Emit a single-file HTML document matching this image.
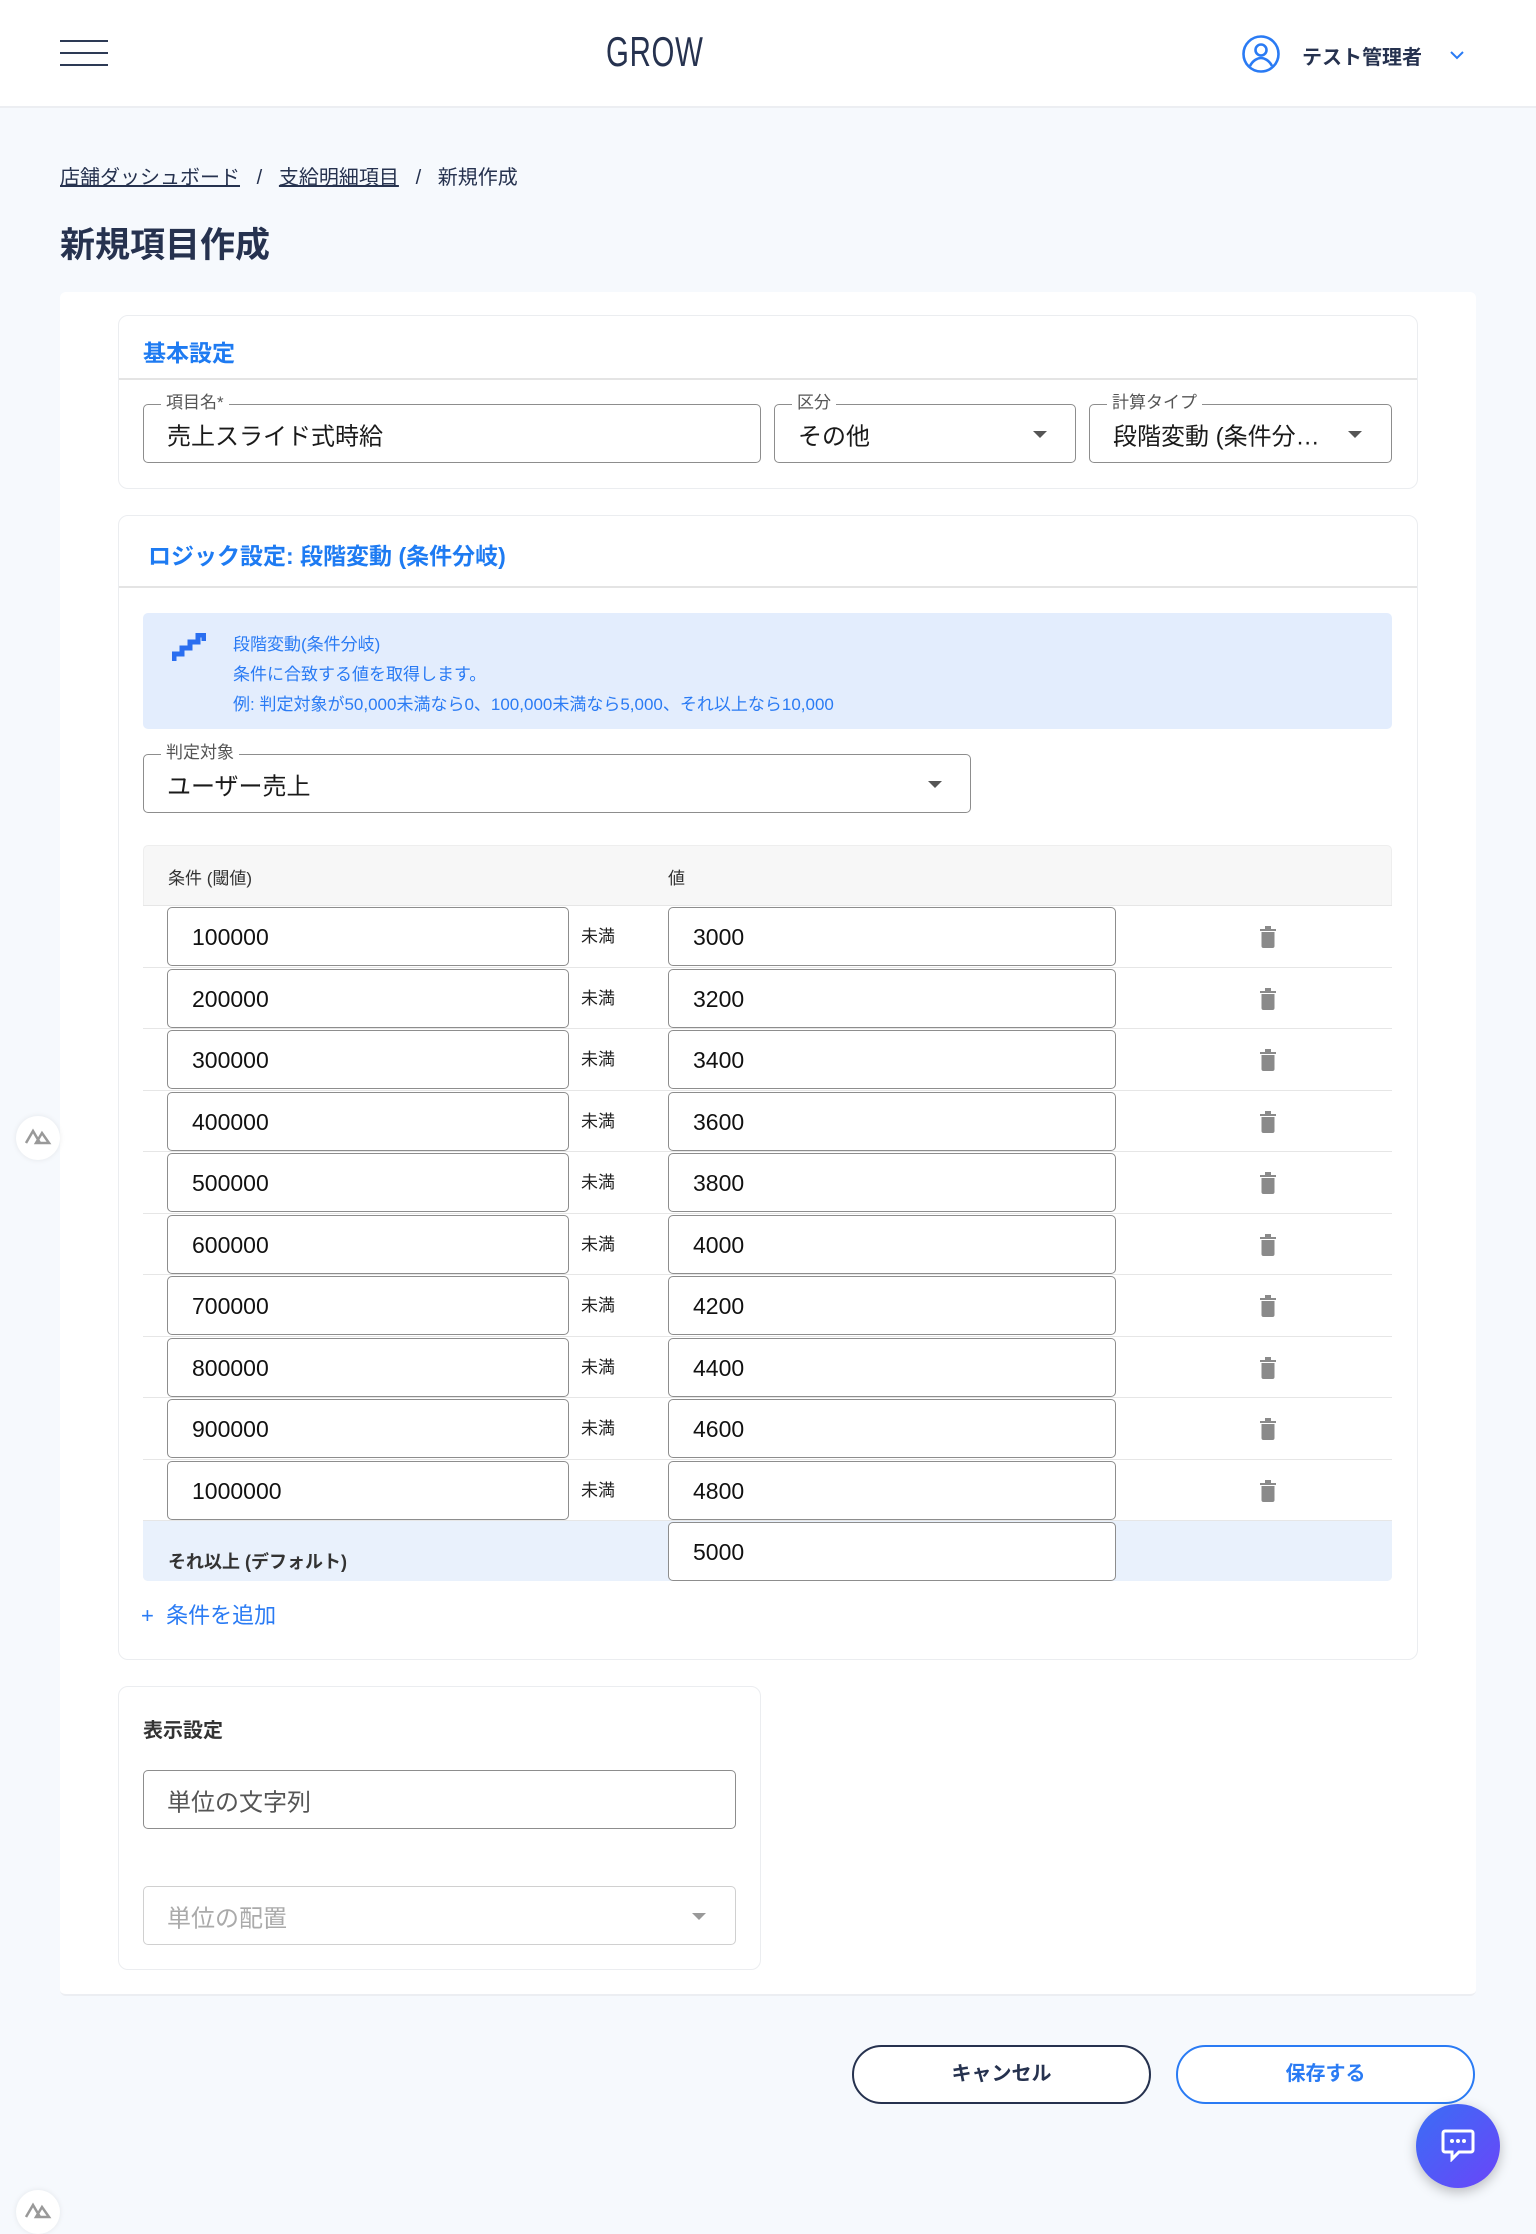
<!DOCTYPE html>
<html><head><meta charset="utf-8"><style>
*{box-sizing:border-box;margin:0;padding:0}
body{width:1536px;height:2224px;background:#f6f9fd;font-family:"Liberation Sans","Noto Sans CJK JP",sans-serif;color:#222;position:relative;overflow:hidden}
.a{position:absolute}
.hdr{left:0;top:0;width:1536px;height:108px;background:#fff;border-bottom:2px solid #eceef2}
.card{background:#fff;border:1.5px solid #ebedf0;border-radius:10px}
.fld{border:1.5px solid #8d8d8d;border-radius:5px;background:#fff}
.lbl{font-size:17px;color:#555;background:#fff;padding:0 5px;position:absolute;top:-12px;left:17px;line-height:20px}
.val{position:absolute;left:23px;top:50%;transform:translateY(-50%);font-size:24px;color:#1a1a1a}
.caret{position:absolute;width:0;height:0;border-left:7px solid transparent;border-right:7px solid transparent;border-top:7px solid #555;top:50%;margin-top:-3px}
.row{position:absolute;left:143px;width:1249px;height:62px;border-top:1.5px solid #e6e6e6;background:#fff}
.in{position:absolute;top:1px;height:59px;border:1.5px solid #8d8d8d;border-radius:5px;background:#fff;font-size:23px;padding-left:24px;line-height:58px;color:#111}
.mm{position:absolute;left:438px;top:16px;font-size:17px;color:#222}
.tr{position:absolute;left:1117px;top:20px;width:16px;height:22px}
</style></head><body>
<div class="a hdr"></div>
<div class="a" style="left:60px;top:40px;width:48px;height:2px;background:#2d3a55"></div>
<div class="a" style="left:60px;top:52px;width:48px;height:2px;background:#2d3a55"></div>
<div class="a" style="left:60px;top:64px;width:48px;height:2px;background:#2d3a55"></div>
<div class="a" style="left:606px;top:28px;font-size:42px;color:#26324f;transform:scaleX(0.70);transform-origin:left;letter-spacing:1px;font-weight:300">GROW</div>
<svg class="a" style="left:1241px;top:34px" width="40" height="40" viewBox="0 0 40 40"><circle cx="20" cy="20" r="17.5" fill="none" stroke="#2a7bf4" stroke-width="2.6"/><circle cx="20" cy="16" r="5.5" fill="none" stroke="#2a7bf4" stroke-width="2.6"/><path d="M9 32c3-6 8-8 11-8s8 2 11 8" fill="none" stroke="#2a7bf4" stroke-width="2.6"/></svg>
<div class="a" style="left:1302px;top:41px;font-size:20px;font-weight:bold;color:#26324f">テスト管理者</div>
<svg class="a" style="left:1449px;top:49px" width="16" height="12" viewBox="0 0 16 12"><path d="M2 3l6 6 6-6" fill="none" stroke="#2a7bf4" stroke-width="2"/></svg>

<div class="a" style="left:60px;top:161px;font-size:20px;color:#26324f"><span style="text-decoration:underline">店舗ダッシュボード</span>&nbsp;&nbsp; / &nbsp;&nbsp;<span style="text-decoration:underline">支給明細項目</span>&nbsp;&nbsp; / &nbsp;&nbsp;新規作成</div>
<div class="a" style="left:60px;top:217px;font-size:35px;font-weight:bold;color:#26324f">新規項目作成</div>

<div class="a" style="left:60px;top:292px;width:1416px;height:1704px;background:#fff;border-radius:6px;border-bottom:2px solid #eceef2"></div>

<div class="a card" style="left:118px;top:315px;width:1300px;height:174px"></div>
<div class="a" style="left:143px;top:334px;font-size:23px;font-weight:bold;color:#1e7bf2">基本設定</div>
<div class="a" style="left:119px;top:378px;width:1298px;height:2px;background:#e4e4e4"></div>
<div class="a fld" style="left:143px;top:404px;width:618px;height:59px"><span class="lbl">項目名*</span><span class="val">売上スライド式時給</span></div>
<div class="a fld" style="left:774px;top:404px;width:302px;height:59px"><span class="lbl">区分</span><span class="val">その他</span><span class="caret" style="left:258px"></span></div>
<div class="a fld" style="left:1089px;top:404px;width:303px;height:59px"><span class="lbl">計算タイプ</span><span class="val">段階変動 (条件分…</span><span class="caret" style="left:258px"></span></div>

<div class="a card" style="left:118px;top:515px;width:1300px;height:1145px"></div>
<div class="a" style="left:148px;top:537px;font-size:23px;font-weight:bold;color:#1e7bf2">ロジック設定: 段階変動 (条件分岐)</div>
<div class="a" style="left:119px;top:586px;width:1298px;height:2px;background:#e4e4e4"></div>
<div class="a" style="left:143px;top:613px;width:1249px;height:116px;background:#e3edfd;border-radius:5px"></div>
<svg class="a" style="left:172px;top:633px" width="34" height="30" viewBox="0 0 34 30"><path d="M2 28v-7h8v-6h8v-6h8V2h6v6" fill="none" stroke="#2a6ef0" stroke-width="5"/></svg>
<div class="a" style="left:233px;top:630px;font-size:17px;color:#2a7bf4;line-height:30px">段階変動(条件分岐)<br>条件に合致する値を取得します。<br>例: 判定対象が50,000未満なら0、100,000未満なら5,000、それ以上なら10,000</div>
<div class="a fld" style="left:143px;top:754px;width:828px;height:59px"><span class="lbl">判定対象</span><span class="val">ユーザー売上</span><span class="caret" style="left:784px"></span></div>

<div class="a" style="left:143px;top:845px;width:1249px;height:736px;background:#f7f7f7;border-radius:5px;border:1px solid #eee"></div>
<div class="a" style="left:168px;top:864px;font-size:17px;color:#333">条件 (閾値)</div>
<div class="a" style="left:668px;top:864px;font-size:17px;color:#333">値</div>

<div class="row" style="top:905px"><div class="in" style="left:24px;width:402px">100000</div><span class="mm">未満</span><div class="in" style="left:525px;width:448px">3000</div><svg class="tr" viewBox="0 0 16 22"><path d="M0 3h16v2H0zM5 0h6v3H5zM1.5 6h13v14a2 2 0 0 1-2 2h-9a2 2 0 0 1-2-2z" fill="#8a8a8a"/></svg></div>
<div class="row" style="top:967px"><div class="in" style="left:24px;width:402px">200000</div><span class="mm">未満</span><div class="in" style="left:525px;width:448px">3200</div><svg class="tr" viewBox="0 0 16 22"><path d="M0 3h16v2H0zM5 0h6v3H5zM1.5 6h13v14a2 2 0 0 1-2 2h-9a2 2 0 0 1-2-2z" fill="#8a8a8a"/></svg></div>
<div class="row" style="top:1028px"><div class="in" style="left:24px;width:402px">300000</div><span class="mm">未満</span><div class="in" style="left:525px;width:448px">3400</div><svg class="tr" viewBox="0 0 16 22"><path d="M0 3h16v2H0zM5 0h6v3H5zM1.5 6h13v14a2 2 0 0 1-2 2h-9a2 2 0 0 1-2-2z" fill="#8a8a8a"/></svg></div>
<div class="row" style="top:1090px"><div class="in" style="left:24px;width:402px">400000</div><span class="mm">未満</span><div class="in" style="left:525px;width:448px">3600</div><svg class="tr" viewBox="0 0 16 22"><path d="M0 3h16v2H0zM5 0h6v3H5zM1.5 6h13v14a2 2 0 0 1-2 2h-9a2 2 0 0 1-2-2z" fill="#8a8a8a"/></svg></div>
<div class="row" style="top:1151px"><div class="in" style="left:24px;width:402px">500000</div><span class="mm">未満</span><div class="in" style="left:525px;width:448px">3800</div><svg class="tr" viewBox="0 0 16 22"><path d="M0 3h16v2H0zM5 0h6v3H5zM1.5 6h13v14a2 2 0 0 1-2 2h-9a2 2 0 0 1-2-2z" fill="#8a8a8a"/></svg></div>
<div class="row" style="top:1213px"><div class="in" style="left:24px;width:402px">600000</div><span class="mm">未満</span><div class="in" style="left:525px;width:448px">4000</div><svg class="tr" viewBox="0 0 16 22"><path d="M0 3h16v2H0zM5 0h6v3H5zM1.5 6h13v14a2 2 0 0 1-2 2h-9a2 2 0 0 1-2-2z" fill="#8a8a8a"/></svg></div>
<div class="row" style="top:1274px"><div class="in" style="left:24px;width:402px">700000</div><span class="mm">未満</span><div class="in" style="left:525px;width:448px">4200</div><svg class="tr" viewBox="0 0 16 22"><path d="M0 3h16v2H0zM5 0h6v3H5zM1.5 6h13v14a2 2 0 0 1-2 2h-9a2 2 0 0 1-2-2z" fill="#8a8a8a"/></svg></div>
<div class="row" style="top:1336px"><div class="in" style="left:24px;width:402px">800000</div><span class="mm">未満</span><div class="in" style="left:525px;width:448px">4400</div><svg class="tr" viewBox="0 0 16 22"><path d="M0 3h16v2H0zM5 0h6v3H5zM1.5 6h13v14a2 2 0 0 1-2 2h-9a2 2 0 0 1-2-2z" fill="#8a8a8a"/></svg></div>
<div class="row" style="top:1397px"><div class="in" style="left:24px;width:402px">900000</div><span class="mm">未満</span><div class="in" style="left:525px;width:448px">4600</div><svg class="tr" viewBox="0 0 16 22"><path d="M0 3h16v2H0zM5 0h6v3H5zM1.5 6h13v14a2 2 0 0 1-2 2h-9a2 2 0 0 1-2-2z" fill="#8a8a8a"/></svg></div>
<div class="row" style="top:1459px"><div class="in" style="left:24px;width:402px">1000000</div><span class="mm">未満</span><div class="in" style="left:525px;width:448px">4800</div><svg class="tr" viewBox="0 0 16 22"><path d="M0 3h16v2H0zM5 0h6v3H5zM1.5 6h13v14a2 2 0 0 1-2 2h-9a2 2 0 0 1-2-2z" fill="#8a8a8a"/></svg></div>
<div class="row" style="top:1520px;height:61px;background:#e9f1fc;border-radius:0 0 5px 5px"><span style="position:absolute;left:25px;top:27px;font-size:18px;color:#333;font-weight:bold">それ以上 (デフォルト)</span><div class="in" style="left:525px;width:448px">5000</div></div>

<div class="a" style="left:141px;top:1598px;font-size:22px;color:#2a7bf4">+&nbsp;&nbsp;条件を追加</div>

<div class="a card" style="left:118px;top:1686px;width:643px;height:284px"></div>
<div class="a" style="left:143px;top:1714px;font-size:20px;font-weight:bold;color:#333">表示設定</div>
<div class="a fld" style="left:143px;top:1770px;width:593px;height:59px"><span class="val" style="color:#555">単位の文字列</span></div>
<div class="a fld" style="left:143px;top:1886px;width:593px;height:59px;border-color:#d0d0d0"><span class="val" style="color:#aaa">単位の配置</span><span class="caret" style="left:548px;border-top-color:#999"></span></div>

<div class="a" style="left:852px;top:2045px;width:299px;height:59px;border:2px solid #26324f;border-radius:30px;background:#fff;text-align:center;line-height:55px;font-size:20px;font-weight:bold;color:#26324f">キャンセル</div>
<div class="a" style="left:1176px;top:2045px;width:299px;height:59px;border:2px solid #2a7bf4;border-radius:30px;background:#fff;text-align:center;line-height:55px;font-size:20px;font-weight:bold;color:#2a7bf4">保存する</div>

<div class="a" style="left:1416px;top:2104px;width:84px;height:84px;border-radius:50%;background:linear-gradient(135deg,#3a6ef6,#6a45f8);box-shadow:0 4px 12px rgba(0,0,0,.25)"></div>
<svg class="a" style="left:1440px;top:2128px" width="36" height="34" viewBox="0 0 36 34"><path d="M5 3h26a2 2 0 0 1 2 2v17a2 2 0 0 1-2 2H19l-7 7v-7H5a2 2 0 0 1-2-2V5a2 2 0 0 1 2-2z" fill="none" stroke="#fff" stroke-width="3"/><circle cx="12" cy="13" r="2" fill="#fff"/><circle cx="18" cy="13" r="2" fill="#fff"/><circle cx="24" cy="13" r="2" fill="#fff"/></svg>

<div class="a" style="left:16px;top:1116px;width:44px;height:44px;border-radius:50%;background:#fff;box-shadow:0 0 6px rgba(0,0,0,.08)"></div>
<svg class="a" style="left:24px;top:1127px" width="28" height="18" viewBox="0 0 28 18"><path d="M2 16L9 4l7 12M12 16l6-10 7 10z" fill="none" stroke="#999" stroke-width="2.5"/></svg>
<div class="a" style="left:16px;top:2190px;width:44px;height:44px;border-radius:50%;background:#fff;box-shadow:0 0 6px rgba(0,0,0,.08)"></div>
<svg class="a" style="left:24px;top:2201px" width="28" height="18" viewBox="0 0 28 18"><path d="M2 16L9 4l7 12M12 16l6-10 7 10z" fill="none" stroke="#999" stroke-width="2.5"/></svg>
</body></html>
